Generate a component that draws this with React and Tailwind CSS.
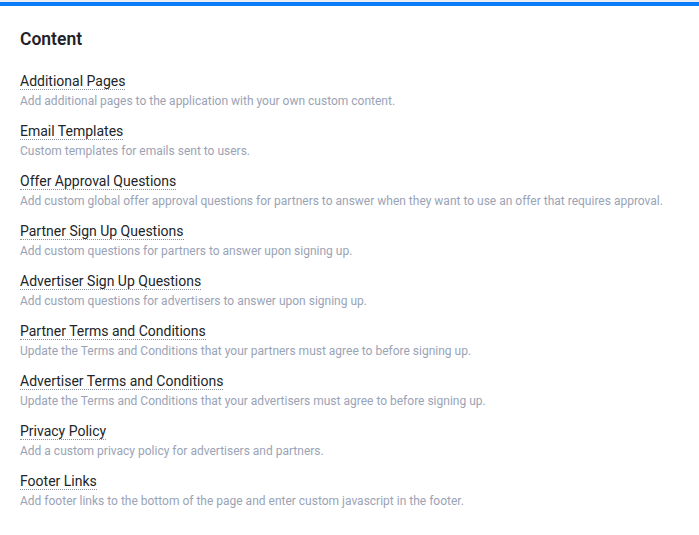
const items = [
  ['Additional Pages', 'Add additional pages to the application with your own custom content.'],
  ['Email Templates', 'Custom templates for emails sent to users.'],
  ['Offer Approval Questions', 'Add custom global offer approval questions for partners to answer when they want to use an offer that requires approval.'],
  ['Partner Sign Up Questions', 'Add custom questions for partners to answer upon signing up.'],
  ['Advertiser Sign Up Questions', 'Add custom questions for advertisers to answer upon signing up.'],
  ['Partner Terms and Conditions', 'Update the Terms and Conditions that your partners must agree to before signing up.'],
  ['Advertiser Terms and Conditions', 'Update the Terms and Conditions that your advertisers must agree to before signing up.'],
  ['Privacy Policy', 'Add a custom privacy policy for advertisers and partners.'],
  ['Footer Links', 'Add footer links to the bottom of the page and enter custom javascript in the footer.'],
]

export default function App() {
  return (
    <div className="min-h-screen bg-white font-['Roboto',sans-serif]">
      <div className="h-[2px] bg-[#eceef1]" />
      <div className="h-1 bg-[#0a7cf8]" />
      <div className="px-5 pt-[21px]">
        <h1 className="text-[17.5px] font-semibold leading-6 text-[#1f2329]">Content</h1>
        <ul className="mt-5">
          {items.map(([title, desc]) => (
            <li key={title} className="mb-3">
              <div className="text-[14px] leading-5 text-[#212529]">
                <span className="cursor-pointer border-b border-dotted border-[#8c939e]">{title}</span>
              </div>
              <p className="mt-[2px] text-[12px] leading-4 text-[#9aa3b6]">{desc}</p>
            </li>
          ))}
        </ul>
      </div>
    </div>
  )
}
